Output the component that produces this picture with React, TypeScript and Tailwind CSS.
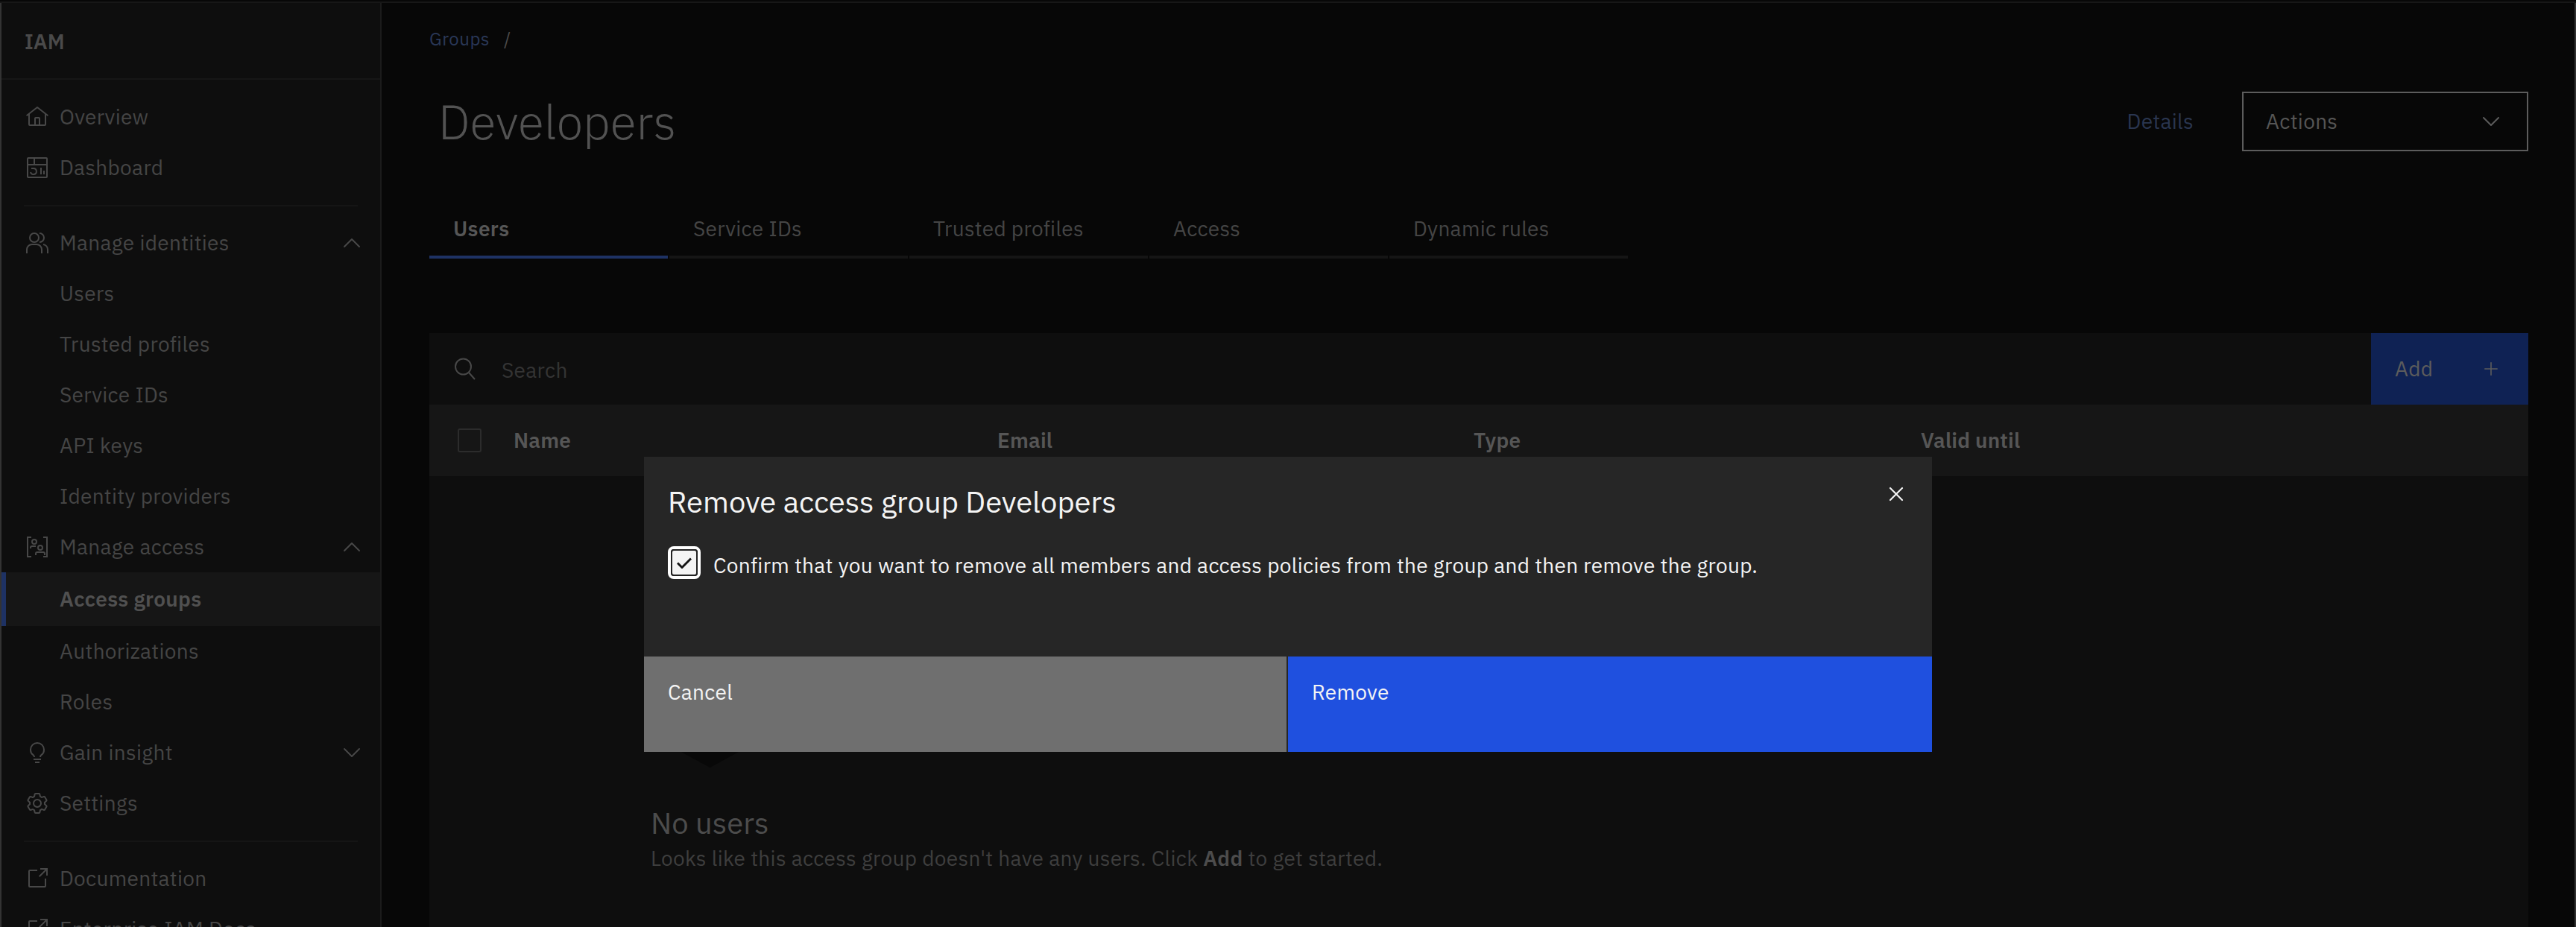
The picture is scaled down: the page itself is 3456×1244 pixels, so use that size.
import { ChevronDown, ChevronUp, Plus, X } from "lucide-react";
import type { ReactNode } from "react";

const font = "font-['IBM_Plex_Sans','Roboto','Liberation_Sans',sans-serif]";

const HomeIcon = () => (
  <svg viewBox="0 0 32 32" fill="currentColor" className="h-8 w-8">
    <path d="M16.6 2.2a1 1 0 0 0-1.2 0L1 13.4l1.2 1.6L4 13.6V26a2 2 0 0 0 2 2h20a2 2 0 0 0 2-2V13.6l1.8 1.4 1.2-1.6zM18 26h-4v-8h4zm2 0v-8a2 2 0 0 0-2-2h-4a2 2 0 0 0-2 2v8H6V12.1l10-7.8 10 7.8V26z" />
  </svg>
);

const DashIcon = () => (
  <svg viewBox="0 0 32 32" fill="none" stroke="currentColor" strokeWidth="2" className="h-8 w-8">
    <rect x="3" y="3" width="26" height="26" rx="1" />
    <path d="M3 12h26M12 3v9M21 16v9M25 20v5" />
    <path d="M8 17h3a4 4 0 1 1-4 5" />
  </svg>
);

const PeopleIcon = () => (
  <svg viewBox="0 0 32 32" fill="none" stroke="currentColor" strokeWidth="2" className="h-8 w-8">
    <circle cx="12" cy="9" r="6" />
    <path d="M2 30v-5a7 7 0 0 1 7-7h6a7 7 0 0 1 7 7v5" />
    <path d="M19 3a6 6 0 0 1 0 12M24 18a7 7 0 0 1 6 7v5" />
  </svg>
);

const AccessIcon = () => (
  <svg viewBox="0 0 32 32" fill="none" stroke="currentColor" strokeWidth="2" className="h-8 w-8">
    <path d="M8 3H3v26h5M24 3h5v26h-5" />
    <circle cx="12" cy="9" r="3" />
    <circle cx="20" cy="17" r="3" />
    <path d="M7 18v-1a2 2 0 0 1 2-2h5M14 27v-2a2 2 0 0 1 2-2h8a2 2 0 0 1 2 2v2" />
  </svg>
);

const IdeaIcon = () => (
  <svg viewBox="0 0 32 32" fill="currentColor" className="h-8 w-8">
    <path d="M11 24h10v2H11zM13 28h6v2h-6zM16 2A10 10 0 0 0 6 12a9.2 9.2 0 0 0 3.5 7.6c1 .9 1.5 1.5 1.5 2.4h2c0-1.8-1.1-2.9-2.2-3.9A7.2 7.2 0 0 1 8 12a8 8 0 0 1 16 0 7.2 7.2 0 0 1-2.8 6.1c-1.1 1-2.2 2-2.2 3.9h2c0-.9.5-1.5 1.5-2.4A9.2 9.2 0 0 0 26 12 10 10 0 0 0 16 2z" />
  </svg>
);

const GearIcon = () => (
  <svg viewBox="0 0 32 32" fill="currentColor" className="h-8 w-8">
    <path d="M27 16.76c0-.25 0-.5 0-.76s0-.51 0-.77l1.92-1.68A2 2 0 0 0 29.3 11L26.94 7a2 2 0 0 0-1.73-1 2 2 0 0 0-.64.1l-2.43.82a11.35 11.35 0 0 0-1.31-.75l-.51-2.52a2 2 0 0 0-2-1.61h-4.68a2 2 0 0 0-2 1.61l-.51 2.52a11.48 11.48 0 0 0-1.32.75L7.43 6.06A2 2 0 0 0 6.79 6a2 2 0 0 0-1.73 1L2.7 11a2 2 0 0 0 .41 2.51L5 15.24c0 .25 0 .5 0 .76s0 .51 0 .77l-1.89 1.68A2 2 0 0 0 2.7 21l2.36 4a2 2 0 0 0 1.73 1 2 2 0 0 0 .64-.1l2.43-.82a11.35 11.35 0 0 0 1.31.75l.51 2.52a2 2 0 0 0 2 1.61h4.72a2 2 0 0 0 2-1.61l.51-2.52a11.48 11.48 0 0 0 1.32-.75l2.42.82a2 2 0 0 0 .64.1 2 2 0 0 0 1.73-1L29.3 21a2 2 0 0 0-.41-2.51zM25.21 24l-3.43-1.16a8.86 8.86 0 0 1-2.71 1.57L18.36 28h-4.72l-.71-3.55a9.36 9.36 0 0 1-2.7-1.57L6.79 24l-2.36-4 2.72-2.4a8.9 8.9 0 0 1 0-3.13L4.43 12l2.36-4 3.43 1.16a8.86 8.86 0 0 1 2.71-1.57L13.64 4h4.72l.71 3.55a9.36 9.36 0 0 1 2.7 1.57L25.21 8l2.36 4-2.72 2.4a8.9 8.9 0 0 1 0 3.13L27.57 20z" />
    <path d="M16 22a6 6 0 1 1 6-6 5.94 5.94 0 0 1-6 6zm0-10a3.91 3.91 0 0 0-4 4 3.91 3.91 0 0 0 4 4 3.91 3.91 0 0 0 4-4 3.91 3.91 0 0 0-4-4z" />
  </svg>
);

const LaunchIcon = () => (
  <svg viewBox="0 0 32 32" fill="currentColor" className="h-8 w-8">
    <path d="M26 28H6a2 2 0 0 1-2-2V6a2 2 0 0 1 2-2h10v2H6v20h20V16h2v10a2 2 0 0 1-2 2z" />
    <path d="M20 2v2h6.586L18 12.586 19.414 14 28 5.414V12h2V2z" />
  </svg>
);

const SearchIcon = () => (
  <svg viewBox="0 0 32 32" fill="none" stroke="currentColor" strokeWidth="2" className="h-8 w-8">
    <circle cx="13.5" cy="13" r="10.5" />
    <path d="M21 21l8 9" />
  </svg>
);

function NavRow({ icon, label, chevron }: { icon?: ReactNode; label: string; chevron?: "up" | "down" }) {
  return (
    <div className="flex h-[68px] items-center pl-8 pr-[18px] text-[28px] tracking-[0.32px] text-[#454545]">
      <div className="w-8 text-[#484848]">{icon}</div>
      <span className="ml-[14px] flex-1">{label}</span>
      {chevron === "up" && <ChevronUp className="h-10 w-10 text-[#484848]" strokeWidth={1.2} />}
      {chevron === "down" && <ChevronDown className="h-10 w-10 text-[#484848]" strokeWidth={1.2} />}
    </div>
  );
}

const Sidebar = () => (
  <aside className="flex h-[1240px] w-[512px] shrink-0 flex-col overflow-hidden border-x-2 border-l-[#333333] border-r-[#1b1b1b] bg-[#0e0e0e]">
    <div className="flex h-[103px] shrink-0 items-center border-b-2 border-[#161616] pl-[31px] pt-[3px] text-[28px] font-semibold text-[#4a4a4a]">
      IAM
    </div>
    <div className="pt-4">
      <NavRow icon={<HomeIcon />} label="Overview" />
      <NavRow icon={<DashIcon />} label="Dashboard" />
      <div className="mx-[30px] mb-[15px] mt-4 h-0.5 bg-[#151515]" />
      <NavRow icon={<PeopleIcon />} label="Manage identities" chevron="up" />
      <NavRow label="Users" />
      <NavRow label="Trusted profiles" />
      <NavRow label="Service IDs" />
      <NavRow label="API keys" />
      <NavRow label="Identity providers" />
      <NavRow icon={<AccessIcon />} label="Manage access" chevron="up" />
      <div className="flex h-[72px] items-center border-l-[6px] border-[#1e3264] bg-[#161616] pl-[72px] text-[28px] font-semibold tracking-[0.32px] text-[#505050]">
        Access groups
      </div>
      <NavRow label="Authorizations" />
      <NavRow label="Roles" />
      <NavRow icon={<IdeaIcon />} label="Gain insight" chevron="down" />
      <NavRow icon={<GearIcon />} label="Settings" />
      <div className="mx-[30px] mb-[15px] mt-4 h-0.5 bg-[#151515]" />
      <NavRow icon={<LaunchIcon />} label="Documentation" />
      <NavRow icon={<LaunchIcon />} label="Enterprise IAM Docs" />
    </div>
  </aside>
);

const tabs = ["Users", "Service IDs", "Trusted profiles", "Access", "Dynamic rules"];

const Main = () => (
  <main className="h-[1240px] min-w-0 flex-1 overflow-hidden border-r-2 border-[#333333] pl-16 pr-[62px]">
    <div className="flex h-[97px] items-center gap-[19px] pb-[2px] text-[24px] tracking-[0.5px]">
      <span className="text-[#2a3858]">Groups</span>
      <span className="text-[#4a4a4a]">/</span>
    </div>
    <div className="flex h-[124px] items-center justify-between">
      <h1 className="pl-3 text-[64px] font-light leading-none text-[#525252]">Developers</h1>
      <div className="flex items-center">
        <span className="mr-[65px] text-[28px] tracking-[0.32px] text-[#2a3650]">Details</span>
        <div className="flex h-20 w-[384px] items-center justify-between border-2 border-[#5c5c5c] pl-[30px] pr-7 text-[28px] tracking-[0.32px] text-[#555555]">
          Actions
          <ChevronDown className="h-10 w-10 text-[#5c5c5c]" strokeWidth={1.2} />
        </div>
      </div>
    </div>
    <div className="mt-[42px] flex gap-0.5">
      {tabs.map((t, i) => (
        <div
          key={t}
          className={
            i === 0
              ? "flex h-[80px] w-[320px] items-center border-b-4 border-[#1e3264] pl-8 pt-1 text-[28px] font-semibold tracking-[0.32px] text-[#565656]"
              : "flex h-[80px] w-[320px] items-center border-b-4 border-[#151515] pl-8 pt-1 text-[28px] tracking-[0.32px] text-[#454545]"
          }
        >
          {t}
        </div>
      ))}
    </div>
    <div className="mt-[100px] bg-[#0e0e0e]">
      <div className="flex h-24 items-center">
        <div className="ml-8 text-[#484848]">
          <SearchIcon />
        </div>
        <span className="ml-[33px] flex-1 pt-1 text-[28px] tracking-[0.32px] text-[#343434]">Search</span>
        <div className="flex h-full w-[211px] items-center justify-between bg-[#0f2254] pl-8 pr-9 text-[28px] tracking-[0.32px] text-[#5c5c5c]">
          Add
          <Plus className="h-7 w-7 text-[#5c5c5c]" strokeWidth={1.4} />
        </div>
      </div>
      <div className="flex h-24 items-center bg-[#161616] text-[28px] font-semibold tracking-[0.2px] text-[#565656]">
        <div className="ml-[38px] h-8 w-8 rounded-[3px] border-2 border-[#2c2c2c]" />
        <span className="ml-[43px] w-[649px]">Name</span>
        <span className="w-[639px]">Email</span>
        <span className="w-[600px]">Type</span>
        <span>Valid until</span>
      </div>
      <div className="h-[605px] pl-[297px] pt-[370px]">
        <svg viewBox="0 0 77 21" className="ml-[41px] h-[21px] w-[77px]">
          <polygon points="0,0 77,0 38.5,21" fill="#080808" />
        </svg>
        <div className="mt-[50px] text-[40px] leading-[48px] text-[#4c4c4c]">No users</div>
        <div className="mt-[3px] text-[28px] tracking-[0.32px] text-[#3e3e3e]">
          Looks like this access group doesn't have any users. Click <b className="font-semibold text-[#4c4c4c]">Add</b> to get started.
        </div>
      </div>
    </div>
  </main>
);

const Modal = () => (
  <div className="absolute left-[864px] top-[613px] flex h-[396px] w-[1728px] flex-col bg-[#262626]">
    <div className="relative flex-1 pl-8 pt-[30px]">
      <div className="text-[40px] leading-[60px] text-[#f4f4f4]">Remove access group Developers</div>
      <X className="absolute right-8 top-[34px] h-8 w-8 text-[#f4f4f4]" strokeWidth={1.6} />
      <div className="mt-[27px] flex items-center">
        <div className="flex h-11 w-11 items-center justify-center rounded-lg border-4 border-white">
          <div className="flex h-9 w-9 items-center justify-center rounded-[4px] border-2 border-[#222222] bg-[#f4f4f4]">
            <svg viewBox="0 0 20 15" fill="none" stroke="#161616" strokeWidth="3" className="h-[15px] w-5">
              <path d="M1 7.5l6 6L19 1.5" />
            </svg>
          </div>
        </div>
        <span className="ml-[17px] pt-2 text-[28px] tracking-[0.32px] text-[#f4f4f4]">
          Confirm that you want to remove all members and access policies from the group and then remove the group.
        </span>
      </div>
    </div>
    <div className="flex h-32 gap-0.5 text-[28px] tracking-[0.32px] text-[#f4f4f4]">
      <div className="w-[862px] bg-[#6f6f6f] pl-8 pt-[27px]">Cancel</div>
      <div className="flex-1 bg-[#1f50df] pl-8 pt-[27px]">Remove</div>
    </div>
  </div>
);

export default function App() {
  return (
    <div className={`relative h-[1244px] w-[3456px] overflow-hidden bg-[#070707] ${font}`}>
      <div className="mt-0.5 h-0.5 bg-[#171717]" />
      <div className="flex">
        <Sidebar />
        <Main />
      </div>
      <Modal />
    </div>
  );
}
